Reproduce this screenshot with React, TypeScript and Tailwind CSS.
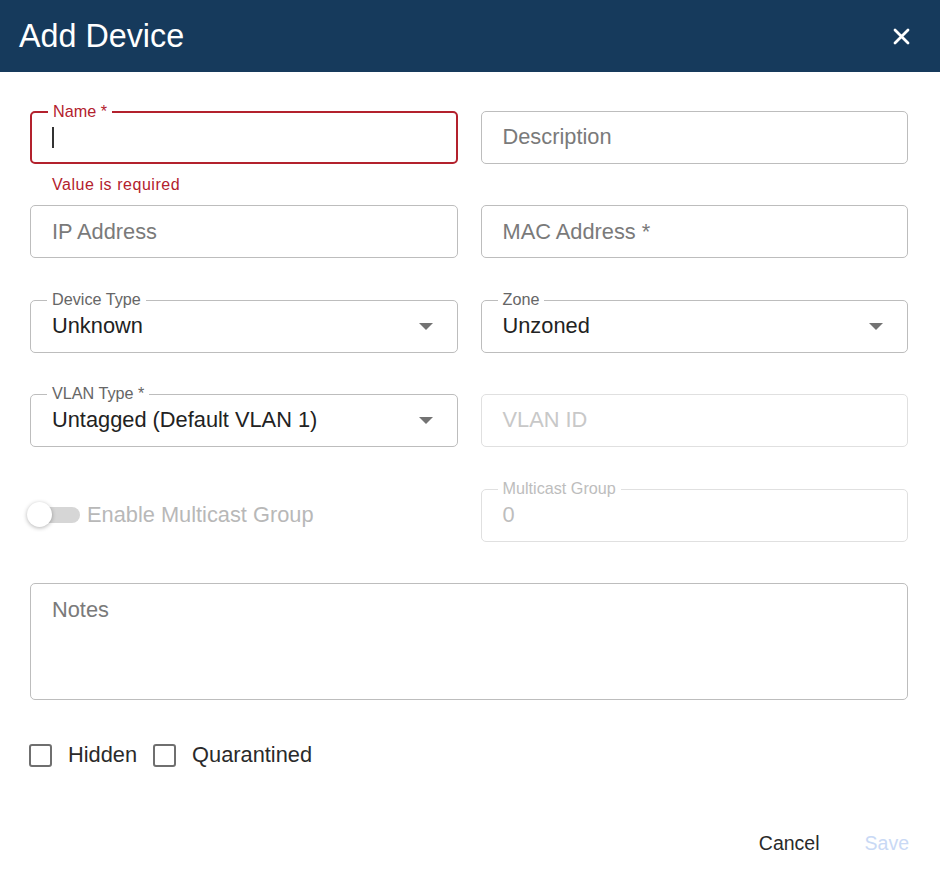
import React from "react";

const font = { fontFamily: "'Liberation Sans', Arial, sans-serif" };

function Outlined({
  label,
  value,
  placeholder,
  select,
  disabled,
  error,
  focused,
}: {
  label?: string;
  value?: string;
  placeholder?: string;
  select?: boolean;
  disabled?: boolean;
  error?: boolean;
  focused?: boolean;
}) {
  const border = error
    ? "border-2 border-[#b3212d]"
    : disabled
      ? "border border-[#e0e0e0]"
      : "border border-[#bdbdbd]";
  const labelColor = error ? "text-[#b3212d]" : disabled ? "text-[#bdbdbd]" : "text-[#666666]";
  return (
    <div className={`relative h-[53px] rounded-[5px] ${border} flex items-center ${error ? "pl-[20px] pr-[20px]" : "pl-[21px] pr-[21px]"}`}>
      {label && (
        <span className={`absolute -top-[12px] left-[16px] bg-white px-[5px] text-[16.2px] leading-[20px] ${labelColor}`}>
          {label}
        </span>
      )}
      <div className="flex-1 flex items-center text-[21.8px]">
        {focused && <span className="inline-block w-[2px] h-[21px] bg-[#333]" />}
        {value !== undefined && (
          <span className={disabled ? "text-[#bdbdbd]" : "text-[#222222]"}>{value}</span>
        )}
        {placeholder && (
          <span className={disabled ? "text-[#c8c8c8]" : "text-[#7a7a7a]"}>{placeholder}</span>
        )}
      </div>
      {select && (
        <svg width="14" height="7" viewBox="0 0 14 7" className="mr-[3px]">
          <path d="M0 0 L14 0 L7 7 Z" fill="#737373" />
        </svg>
      )}
    </div>
  );
}

function Checkbox({ label }: { label: string }) {
  return (
    <div className="flex items-center">
      <span className="w-[23px] h-[23px] rounded-[3px] border-2 border-[#6f6f6f]" />
      <span className="ml-[16px] text-[21.8px] text-[#2a2a2a]">{label}</span>
    </div>
  );
}

export default function App() {
  return (
    <div className="w-[940px] h-[878px] bg-white flex flex-col" style={font}>
      <div className="h-[72px] bg-[#163a5c] flex items-center justify-between pl-[19px] pr-[30px]">
        <h1 className="text-white text-[32.3px]">Add Device</h1>
        <svg width="17" height="17" viewBox="0 0 17 17">
          <path d="M2 2 L15 15 M15 2 L2 15" stroke="white" strokeWidth="2.8" strokeLinecap="round" />
        </svg>
      </div>

      <div className="pl-[30px] pr-[32px] pt-[39px]">
        <div className="grid grid-cols-2 gap-x-[23px] auto-rows-[94.4px]">
          <div className="flex flex-col">
            <Outlined label="Name *" error focused />
            <span className="pl-[22px] mt-[9px] text-[16px] tracking-[0.55px] text-[#b3212d]">Value is required</span>
          </div>
          <div>
            <Outlined placeholder="Description" />
          </div>

          <div>
            <Outlined placeholder="IP Address" />
          </div>
          <div>
            <Outlined placeholder="MAC Address *" />
          </div>

          <div>
            <Outlined label="Device Type" value="Unknown" select />
          </div>
          <div>
            <Outlined label="Zone" value="Unzoned" select />
          </div>

          <div>
            <Outlined label="VLAN Type *" value="Untagged (Default VLAN 1)" select />
          </div>
          <div>
            <Outlined placeholder="VLAN ID" disabled />
          </div>

          <div className="h-[53px] flex items-center">
            <div className="relative w-[52px] h-[26px] flex items-center">
              <span className="ml-[2px] w-[48px] h-[16px] rounded-full bg-[#d6d6d6]" />
              <span className="absolute left-[-3px] top-[0px] w-[25px] h-[25px] rounded-full bg-white shadow-[0_1px_4px_rgba(0,0,0,0.3)]" />
            </div>
            <span className="ml-[5px] text-[21.8px] text-[#b8b8b8]">Enable Multicast Group</span>
          </div>
          <div>
            <Outlined label="Multicast Group" value="0" disabled />
          </div>
        </div>

        <div className="h-[117px] rounded-[5px] border border-[#bdbdbd] pl-[21px] pt-[10px]">
          <span className="text-[21.8px] text-[#7a7a7a]">Notes</span>
        </div>

        <div className="mt-[39px] flex items-center gap-[16px] -ml-[1px]">
          <Checkbox label="Hidden" />
          <Checkbox label="Quarantined" />
        </div>
      </div>

      <div className="mt-[57px] flex justify-end items-center gap-[45px] pr-[31px]">
        <span className="text-[19.5px] text-[#2a2a2a]">Cancel</span>
        <span className="text-[19.5px] text-[#c9d9f5]">Save</span>
      </div>
    </div>
  );
}
